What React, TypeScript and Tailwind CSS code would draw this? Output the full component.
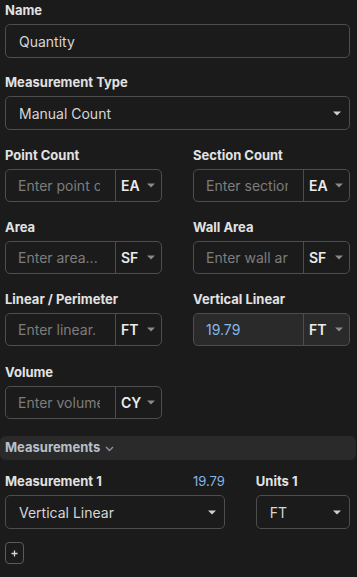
import { FC } from "react";

const Caret: FC<{ className?: string }> = ({ className = "" }) => (
  <svg width="8" height="5" viewBox="0 0 8 5" className={className}>
    <path d="M0 0.5h8L4 4.5z" fill="currentColor" />
  </svg>
);

const Label: FC<{ children: React.ReactNode }> = ({ children }) => (
  <div className="text-[13px] leading-4 font-bold text-[#e2e2e2] mb-[6px]">{children}</div>
);

const UnitInput: FC<{ placeholder?: string; value?: string; unit: string }> = ({ placeholder, value, unit }) => (
  <div className={`flex h-[33px] rounded-[5px] border border-[#4d4d4d] overflow-hidden ${value ? "bg-[#2a2a2a]" : ""}`}>
    <div className="flex-1 min-w-0 pl-[12px] pr-[15px] flex items-center">
      <div className="w-full overflow-hidden whitespace-nowrap text-[14px]">
        {value ? <span className="text-[#86b6e8]">{value}</span> : <span className="text-[#7d7d7d]">{placeholder}</span>}
      </div>
    </div>
    <div className="w-[46px] shrink-0 border-l border-[#4d4d4d] flex items-center justify-between pl-[5px] pr-[6px]">
      <span className="text-[14px] font-semibold text-[#ececec]">{unit}</span>
      <Caret className="text-[#8a8a8a]" />
    </div>
  </div>
);

const Select: FC<{ value: string }> = ({ value }) => (
  <div className="flex h-[34px] items-center justify-between rounded-[5px] border border-[#4d4d4d] pl-[13px] pr-[8px]">
    <span className="text-[14px] text-[#d6d6d6]">{value}</span>
    <Caret className="text-[#cfcfcf]" />
  </div>
);

export default function App() {
  return (
    <div className="min-h-[577px] w-[357px] bg-[#1b1b1b] pt-[2px] text-[#e2e2e2]" style={{ fontFamily: "Inter, 'Noto Sans', sans-serif" }}>
      <div className="pl-[5px] pr-[7px] flex flex-col gap-[17px]">
        <div>
          <Label>Name</Label>
          <div className="flex h-[34px] items-center rounded-[5px] border border-[#4d4d4d] pl-[13px] text-[14px] text-[#d6d6d6]">Quantity</div>
        </div>
        <div className="-mt-px">
          <Label>Measurement Type</Label>
          <Select value="Manual Count" />
        </div>
        <div className="grid grid-cols-2 gap-x-[31px] gap-y-[17px]">
          <div>
            <Label>Point Count</Label>
            <UnitInput placeholder="Enter point count" unit="EA" />
          </div>
          <div>
            <Label>Section Count</Label>
            <UnitInput placeholder="Enter section count" unit="EA" />
          </div>
          <div>
            <Label>Area</Label>
            <UnitInput placeholder="Enter area..." unit="SF" />
          </div>
          <div>
            <Label>Wall Area</Label>
            <UnitInput placeholder="Enter wall area" unit="SF" />
          </div>
          <div>
            <Label>Linear / Perimeter</Label>
            <UnitInput placeholder="Enter linear." unit="FT" />
          </div>
          <div>
            <Label>Vertical Linear</Label>
            <UnitInput value="19.79" unit="FT" />
          </div>
          <div className="mt-[1px]">
            <Label>Volume</Label>
            <UnitInput placeholder="Enter volume" unit="CY" />
          </div>
        </div>
      </div>

      <div className="mt-[17px] mr-[1px] h-[24px] rounded-[6px] bg-[#2a2a2a] flex items-center gap-[5px] pl-[5px]">
        <span className="text-[13px] font-bold text-[#b9c0ca]">Measurements</span>
        <svg width="9" height="6" viewBox="0 0 9 6" className="text-[#8d939b] mt-[1px]">
          <path d="M1 1l3.5 3.5L8 1" fill="none" stroke="currentColor" strokeWidth="1.4" />
        </svg>
      </div>

      <div className="pl-[5px] pr-[7px] mt-[13px] grid grid-cols-[7fr_3fr] gap-x-[31px]">
        <div>
          <div className="flex justify-between">
            <Label>Measurement 1</Label>
            <span className="text-[13px] leading-4 text-[#86b6e8]">19.79</span>
          </div>
          <Select value="Vertical Linear" />
        </div>
        <div>
          <Label>Units 1</Label>
          <Select value="FT" />
        </div>
      </div>

      <div className="pl-[5px] mt-[13px]">
        <div className="w-[19px] h-[22px] rounded-[4px] border border-[#5a5a5a] flex items-center justify-center">
          <svg width="7" height="7" viewBox="0 0 7 7">
            <path d="M3.5 0.5v6M0.5 3.5h6" stroke="#d8d8d8" strokeWidth="1.3" />
          </svg>
        </div>
      </div>
    </div>
  );
}
